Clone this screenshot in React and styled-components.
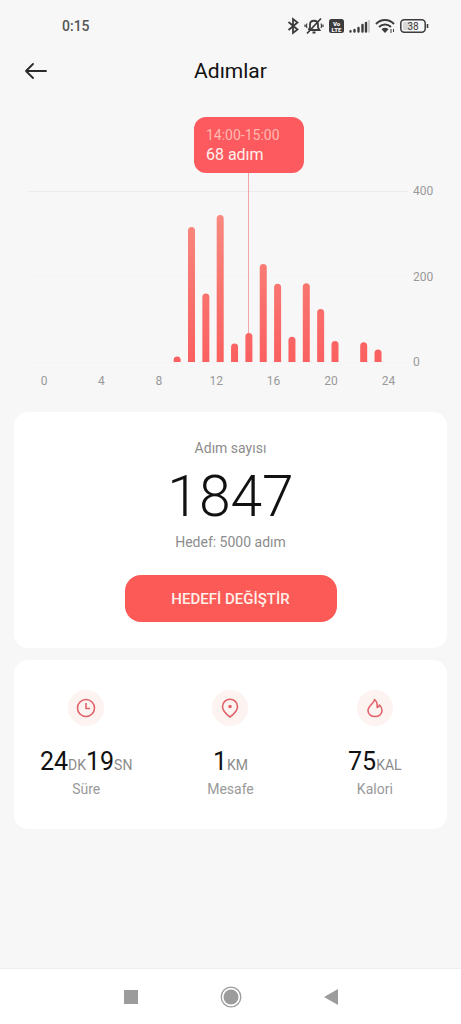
import React from "react";

import styled, { createGlobalStyle } from "styled-components";

// Data
const hours = [
  { hour: 9, steps: 13 },
  { hour: 10, steps: 316 },
  { hour: 11, steps: 160 },
  { hour: 12, steps: 344 },
  { hour: 13, steps: 43 },
  { hour: 14, steps: 68 },
  { hour: 15, steps: 229 },
  { hour: 16, steps: 183 },
  { hour: 17, steps: 59 },
  { hour: 18, steps: 184 },
  { hour: 19, steps: 124 },
  { hour: 20, steps: 49 },
  { hour: 22, steps: 46 },
  { hour: 23, steps: 29 },
];

const hourLabels = [0, 4, 8, 12, 16, 20, 24];
const stepLabels = [0, 200, 400];

const BASE = 257;
const barX = (hour) => 48 + hour * 14.35;
const stepY = (steps) => BASE - steps * 0.4275;

const barPath = ({ hour, steps }) => {
  const left = barX(hour) - 3.5;
  const top = stepY(steps);
  return `M${left} ${BASE}V${top + 3.5}a3.5 3.5 0 0 1 7 0V${BASE}z`;
};

const StepChart = () => (
  <ChartArea>
    <Chart viewBox="0 0 461 290" role="img" aria-label="Saatlik adımlar">
      <defs>
        <linearGradient
          id="bar"
          gradientUnits="userSpaceOnUse"
          x1="0"
          y1="105"
          x2="0"
          y2={BASE}
        >
          <stop offset="0" stopColor="#f88a80" />
          <stop offset="1" stopColor="#fa6060" />
        </linearGradient>
      </defs>
      <path d="M28 86.5H408" stroke="#ececec" />
      <path d="M28 171.5H408M28 257.5H408" stroke="#f4f4f4" />
      <path d={`M248.5 60V${stepY(68)}`} stroke="#f5a3a8" />
      {hours.map((item) => (
        <path key={item.hour} d={barPath(item)} fill="url(#bar)" />
      ))}
      {hourLabels.map((hour) => (
        <AxisText key={hour} x={44 + hour * 14.35} y="280" textAnchor="middle">
          {hour}
        </AxisText>
      ))}
      {stepLabels.map((steps) => (
        <AxisText key={steps} x="413" y={stepY(steps) + 4}>
          {steps}
        </AxisText>
      ))}
    </Chart>
    <Tooltip>
      <TooltipTime>14:00-15:00</TooltipTime>
      <TooltipSteps>68 adım</TooltipSteps>
    </Tooltip>
  </ChartArea>
);

const StatusIcons = () => (
  <IconRow>
    <svg width="12" height="18" viewBox="0 0 12 18" fill="none" stroke="#3c3c3c" strokeWidth="1.8">
      <path d="M1.5 5l9 7.5-4.500 3.500V2l4.500 3.500L1.500 13" />
    </svg>
    <svg width="20" height="18" viewBox="0 0 20 18" fill="none" stroke="#3c3c3c" strokeWidth="1.8">
      <path d="M4.500 13h11L14 10.500V7.500c0-5-8-5-8 0v3L4.500 13M8.500 15.500h3M17 1.500L3 16.500" />
      <path d="M3 6.500c-.8 1.500-.8 3 0 4.500M1 7.500V10M17 6.500c.8 1.500.8 3 0 4.500M19 7.500V10" strokeWidth="1.2" />
    </svg>
    <svg width="15" height="14" viewBox="0 0 15 14">
      <rect width="15" height="14" rx="2.5" fill="#3c3c3c" />
      <BadgeText x="7.5" y="6.5">Vo</BadgeText>
      <BadgeText x="7.5" y="12.5">LTE</BadgeText>
    </svg>
    <svg width="21" height="14" viewBox="0 0 21 14" stroke="#3c3c3c" strokeWidth="2.4" strokeLinecap="round">
      <path d="M1.500 12.500v-.3M5.500 12.500V11M9.500 12.500V9M13.500 12.500V6M17 12.500V4" />
      <path d="M19.800 12.500V2" stroke="#cfcfcf" />
    </svg>
    <svg width="20" height="16" viewBox="0 0 20 16" fill="none" stroke="#3c3c3c" strokeWidth="2">
      <path d="M1 6c5-5.300 13-5.300 18 0M4 9c3.500-3.500 8.500-3.500 12 0" />
      <path d="M6.500 11.200c2-1.800 5-1.800 7 0L10 15z" fill="#3c3c3c" stroke="none" />
      <path d="M16 11v4M18.500 11v3" strokeWidth="1" />
    </svg>
    <svg width="29" height="14" viewBox="0 0 29 14">
      <rect x="0.8" y="0.8" width="24.4" height="12.4" rx="3.5" fill="none" stroke="#3c3c3c" strokeWidth="1.5" />
      <rect x="3" y="3" width="9" height="8" rx="1" fill="#d9d9d9" />
      <path d="M27.500 5v4" stroke="#3c3c3c" strokeWidth="1.6" />
      <BatteryText x="13" y="10.5">38</BatteryText>
    </svg>
  </IconRow>
);

const ClockIcon = () => (
  <StatSvg viewBox="0 0 20 20">
    <circle cx="10" cy="10" r="8.5" />
    <path d="M10 5v5.500h4" />
  </StatSvg>
);

const PinIcon = () => (
  <StatSvg viewBox="0 0 20 20">
    <path d="M10 19c-3-2.300-7.500-6.200-7.500-10.300a7.500 7.500 0 0 1 15 0C17.500 12.800 13 16.700 10 19z" />
    <circle cx="10" cy="8.5" r="1" fill="#e0636a" />
  </StatSvg>
);

const FlameIcon = () => (
  <StatSvg viewBox="0 0 20 20">
    <path d="M9.500 1.500C9 5.500 3 8 3 12.500c0 3.500 3 6 7 6s7-2.500 7-6c0-2.500-1-4.200-2.500-5.500-.3 1.500-1 2.200-2.300 2.500C12.500 6 12 3.500 9.500 1.500z" />
  </StatSvg>
);

const stats = [
  { label: "Süre", icon: <ClockIcon />, parts: [["24", "DK"], ["19", "SN"]] },
  { label: "Mesafe", icon: <PinIcon />, parts: [["1", "KM"]] },
  { label: "Kalori", icon: <FlameIcon />, parts: [["75", "KAL"]] },
];

const App = () => {
  return (
    <>
      <GlobalStyle />
      <Page>
        <StatusBar>
          <Clock>0:15</Clock>
          <StatusIcons />
        </StatusBar>
        <Header>
          <BackButton aria-label="Geri">
            <svg width="22" height="16" viewBox="0 0 22 16" fill="none" stroke="#2a2a2a" strokeWidth="1.8" strokeLinecap="round" strokeLinejoin="round">
              <path d="M21 8H1M8 1L1 8l7 7" />
            </svg>
          </BackButton>
          <Title>Adımlar</Title>
        </Header>
        <StepChart />
        <Cards>
          <GoalCard>
            <Caption>Adım sayısı</Caption>
            <Total>1847</Total>
            <Caption>Hedef: 5000 adım</Caption>
            <GoalButton>HEDEFİ DEĞİŞTİR</GoalButton>
          </GoalCard>
          <StatsCard>
            {stats.map((stat) => (
              <Stat key={stat.label}>
                <StatIcon>{stat.icon}</StatIcon>
                <StatValue>
                  {stat.parts.map(([value, unit]) => (
                    <React.Fragment key={unit}>
                      {value}
                      <Unit>{unit}</Unit>
                    </React.Fragment>
                  ))}
                </StatValue>
                <StatLabel>{stat.label}</StatLabel>
              </Stat>
            ))}
          </StatsCard>
        </Cards>
        <NavBar>
          <NavButton aria-label="Son uygulamalar">
            <svg width="22" height="22" viewBox="0 0 22 22" fill="#9c9c9c">
              <rect x="4" y="4" width="14" height="14" />
            </svg>
          </NavButton>
          <NavButton aria-label="Ana ekran">
            <svg width="22" height="22" viewBox="0 0 22 22" fill="#9c9c9c">
              <circle cx="11" cy="11" r="7.5" />
              <circle cx="11" cy="11" r="9.8" fill="none" stroke="#9c9c9c" strokeWidth="1.3" />
            </svg>
          </NavButton>
          <NavButton aria-label="Geri dön">
            <svg width="22" height="22" viewBox="0 0 22 22" fill="#9c9c9c">
              <path d="M4 11l14-8v16z" />
            </svg>
          </NavButton>
        </NavBar>
      </Page>
    </>
  );
};

const GlobalStyle = createGlobalStyle`
  * {
    box-sizing: border-box;
    margin: 0;
    padding: 0;
  }

  body {
    background: #f7f7f7;
    font-family: Roboto, "Liberation Sans", sans-serif;
  }

  button {
    border: none;
    background: none;
    font-family: inherit;
    cursor: pointer;
  }

  svg {
    display: block;
  }
`;

const Page = styled.div`
  display: flex;
  flex-direction: column;
  min-height: 100vh;
`;

const StatusBar = styled.div`
  display: flex;
  align-items: center;
  justify-content: space-between;
  height: 52px;
  padding: 0 32px 0 62px;
`;

const Clock = styled.span`
  font-size: 14px;
  font-weight: 500;
  color: #555;
`;

const IconRow = styled.div`
  display: flex;
  align-items: center;
  gap: 5px;
`;

const BadgeText = styled.text`
  fill: #f7f7f7;
  font-size: 6px;
  font-weight: 900;
  text-anchor: middle;
`;

const BatteryText = styled.text`
  fill: #3c3c3c;
  font-size: 10px;
  text-anchor: middle;
`;

const Header = styled.header`
  display: grid;
  grid-template-columns: 48px 1fr 48px;
  align-items: center;
  height: 37px;
  padding: 0 12px;
`;

const BackButton = styled.button`
  display: flex;
  align-items: center;
  justify-content: center;
  height: 36px;
`;

const Title = styled.h1`
  font-size: 21px;
  font-weight: 400;
  line-height: 28px;
  text-align: center;
  color: #111;
`;

const ChartArea = styled.section`
  position: relative;
  margin-top: 16px;
`;

const Chart = styled.svg`
  width: 100%;
`;

const AxisText = styled.text`
  fill: #999;
  font-size: 12px;
`;

const Tooltip = styled.div`
  position: absolute;
  top: 12px;
  left: 54%;
  transform: translateX(-50%);
  width: 110px;
  height: 56px;
  padding: 8px 12px;
  border-radius: 12px;
  background: #fd5a5f;
`;

const TooltipTime = styled.p`
  font-size: 14px;
  line-height: 20px;
  color: #ffb9b0;
`;

const TooltipSteps = styled.p`
  font-size: 16px;
  line-height: 20px;
  color: #fff0ec;
`;

const Cards = styled.main`
  display: flex;
  flex-direction: column;
  gap: 12px;
  padding: 17px 14px;
`;

const Card = styled.section`
  border-radius: 14px;
  background: #fff;
`;

const GoalCard = styled(Card)`
  display: flex;
  flex-direction: column;
  align-items: center;
  padding: 26px 16px;
`;

const Caption = styled.p`
  font-size: 14px;
  line-height: 20px;
  color: #8c8c8c;
`;

const Total = styled.p`
  margin: 8px 0 4px;
  font-size: 57px;
  font-weight: 300;
  line-height: 62px;
  color: #111;
`;

const GoalButton = styled.button`
  width: 212px;
  height: 47px;
  margin-top: 23px;
  border-radius: 16px;
  background: #fb5a56;
  font-size: 15px;
  font-weight: 500;
  color: #fff0ea;
`;

const StatsCard = styled(Card)`
  display: grid;
  grid-template-columns: repeat(3, 1fr);
  padding: 30px 0;
`;

const Stat = styled.div`
  display: flex;
  flex-direction: column;
  align-items: center;
`;

const StatIcon = styled.div`
  display: flex;
  align-items: center;
  justify-content: center;
  width: 36px;
  height: 36px;
  border-radius: 50%;
  background: #fdf3f1;
`;

const StatSvg = styled.svg`
  width: 20px;
  height: 20px;
  fill: none;
  stroke: #e0636a;
  stroke-width: 1.6;
  stroke-linejoin: round;
`;

const StatValue = styled.p`
  margin: 21px 0 2px;
  font-size: 25px;
  line-height: 30px;
  color: #111;
`;

const Unit = styled.span`
  font-size: 14px;
  line-height: 20px;
  color: #8c8c8c;
`;

const StatLabel = styled.p`
  font-size: 14px;
  line-height: 20px;
  color: #999;
`;

const NavBar = styled.nav`
  display: flex;
  align-items: center;
  justify-content: center;
  gap: 56px;
  height: 56px;
  margin-top: auto;
  border-top: 1px solid #eee;
  background: #fff;
`;

const NavButton = styled.button`
  display: flex;
  align-items: center;
  justify-content: center;
  width: 44px;
  height: 44px;
`;

export default App;
